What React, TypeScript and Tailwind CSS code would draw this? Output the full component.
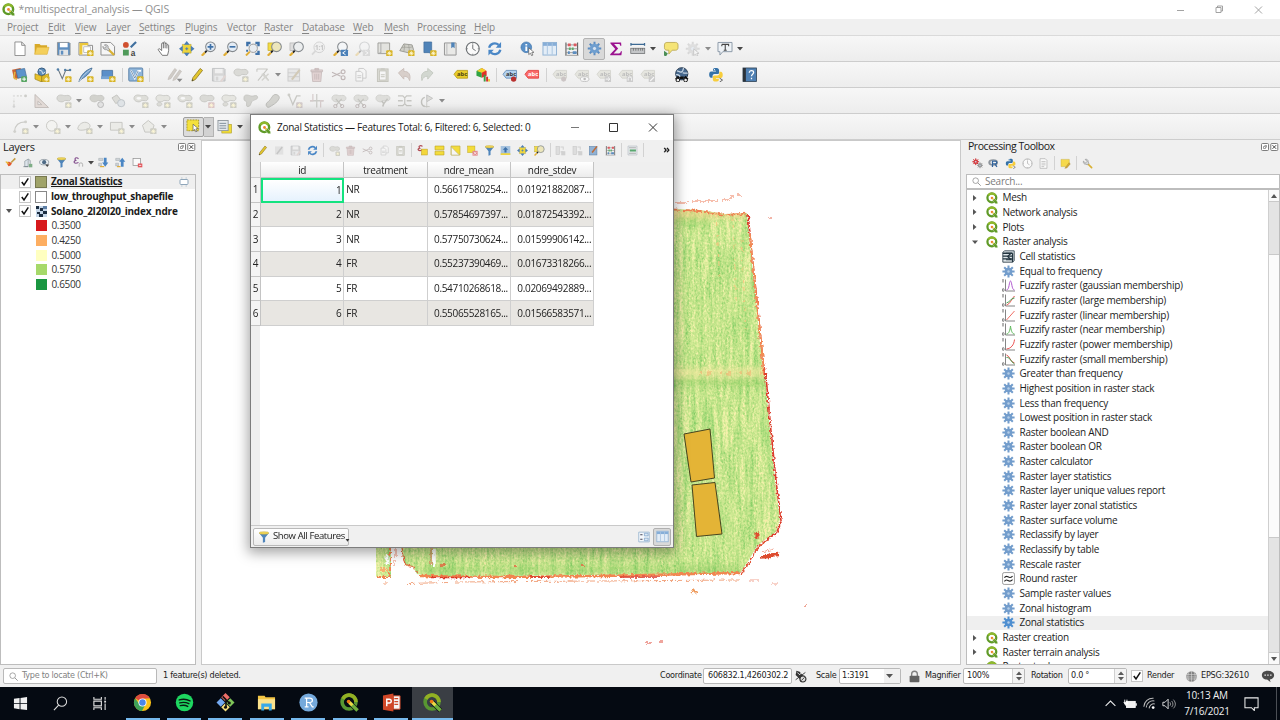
import React, { ReactNode } from "react";

const S = ({ children, className = "size-4", vb = "0 0 16 16" }: { children: ReactNode; className?: string; vb?: string }) => (
  <svg viewBox={vb} className={`shrink-0 ${className}`} fill="none">{children}</svg>
);

const Badge = ({ c = "#d8b426", x = 9.5, y = 9.5 }: { c?: string; x?: number; y?: number }) => (
  <g transform={`translate(${x} ${y})`}>
    <rect width="6.5" height="6.5" rx="1" fill={c} />
    <path d="M3.25 1v4.5M1 3.25h4.5M1.8 1.8l2.9 2.9M4.7 1.8 1.8 4.7" stroke="#fff8d8" strokeWidth=".8" />
  </g>
);
const GB = () => <Badge c="#cdcdc4" />;
const Pencil = ({ c = "#e3c62e", d = "#8a7420" }: { c?: string; d?: string }) => (
  <g><path d="M3 14.5 4 11 11.5 1.5 14 3.5 6.5 13Z" fill={c} stroke={d} strokeWidth=".8" /><path d="m3 14.5.5-1.8 1.2 1Z" fill="#333" /></g>
);
const Lens = ({ fill = "#f4f6f8", handle = true, children }: { fill?: string; handle?: boolean; children?: ReactNode }) => (
  <g>
    {handle && <path d="M6 10 4 12" stroke="#222" strokeWidth="2" />}
    {handle && <path d="M4 12 .8 15.2" stroke="#e0ad33" strokeWidth="2.2" />}
    <circle cx="9.8" cy="6" r="5" fill={fill} stroke="#858a8e" strokeWidth="1.1" />
    {children}
  </g>
);
const Cursor = ({ x = 8, y = 7 }: { x?: number; y?: number }) => (
  <path transform={`translate(${x} ${y})`} d="M0 0v7l1.8-1.4L3 8.2l1.3-.7-1.2-2.5 2.3-.3Z" fill="#fff" stroke="#555" strokeWidth=".7" />
);
const Gear = ({ c = "#6f9fd0", r = "#5b8cc2" }: { c?: string; r?: string }) => (
  <g>
    <path d="M8 .8v14.4M.8 8h14.4M2.9 2.9l10.2 10.2M13.1 2.9 2.9 13.1" stroke={r} strokeWidth="2.1" />
    <circle cx="8" cy="8" r="5" fill={c} />
    <circle cx="8" cy="8" r="2.2" fill="#d4e2f2" stroke={r} strokeWidth=".7" />
  </g>
);
const QLogo = () => (
  <g>
    <circle cx="7.8" cy="7.8" r="5.9" fill="#fff" stroke="#5f9a27" strokeWidth="3" />
    <path d="M3 4.6A5.900 5.900 0 0 1 12.6 4.6" stroke="#8fb82b" strokeWidth="3" />
    <path d="M9 9h2.700l3.8 4.300v2.400h-3L9 11.800Z" fill="#5f9a27" stroke="#fff" strokeWidth=".5" />
    <circle cx="8" cy="8" r="1.700" fill="#ee8432" /><path d="m8.800 8.800 2.200 2.200" stroke="#f0c840" strokeWidth="1.300" />
  </g>
);
const Tag = ({ bg, bd, fg, children }: { bg: string; bd: string; fg: string; children?: ReactNode }) => (
  <g>
    <path d="M1 7.5 4.2 3.5H15v8H4.2Z" fill={bg} stroke={bd} strokeWidth=".9" />
    <text x="4.2" y="9.6" fontSize="6" fontWeight="700" fontFamily="Open Sans, sans-serif" fill={fg}>abc</text>
    {children}
  </g>
);
const Blob = ({ c = "#dadad6" }: { c?: string }) => (
  <path d="M1 5.5C1 2 5 1.500 7.500 2.500s4-1 6.500.5 1.500 5-1 5-3.500-1-5 .5S1 9 1 5.500Z" fill={c} stroke="#c2c2be" strokeWidth=".8" />
);
const Python = () => (
  <g>
    <path d="M8 1C5 1 5.200 2.300 5.200 3.800H8.200v.8H3.500C1.500 4.600 1.200 6.500 1.200 8s.6 3 2 3h1.500V9.300c0-1.200 1-2 2-2h3.100c1 0 1.600-.8 1.600-1.700V3.200C11.400 1.600 10 1 8 1Z" fill="#3572a8" />
    <path d="M8.400 15c3 0 2.800-1.300 2.800-2.800H8.200v-.8h4.700c2 0 2.300-1.900 2.300-3.400s-.6-3-2-3h-1.500v1.700c0 1.200-1 2-2 2H6.600C5.600 8.700 5 9.500 5 10.400v2.400C5 14.400 6.400 15 8.400 15Z" fill="#f7cd3c" />
    <circle cx="6.700" cy="2.700" r=".6" fill="#fff" />
  </g>
);
const Refresh = () => (
  <g stroke="#4a87c6" strokeWidth="2.400"><path d="M2.200 7A6 6 0 0 1 12 4" /><path d="M13.800 9A6 6 0 0 1 4 12" /><path d="M14.500 1v6H9Z" fill="#4a87c6" stroke="none" /><path d="M1.500 15V9H7Z" fill="#4a87c6" stroke="none" /></g>
);
const Clock = ({ c = "#6e7275" }: { c?: string }) => (
  <g><circle cx="8" cy="8" r="6.700" fill="#fafafa" stroke={c} strokeWidth="1.200" /><path d="M8 3.500V8l3 2M8 1.800v1M8 13.200v1M1.800 8h1M13.200 8h1" stroke={c} /></g>
);
const Funnel = ({ c = "#4f85bb" }: { c?: string }) => (
  <g><path d="M1.500 2.500h13L9.500 9v5.500l-3 1V9Z" fill={c} /><ellipse cx="8" cy="2.600" rx="6.500" ry="1.700" fill="#f1d75a" stroke="#b89b26" strokeWidth=".5" /></g>
);
const Trash = () => <g fill="#e2d3d3" stroke="#c4b6b6" strokeWidth=".8"><path d="M3 5h10l-.8 10H3.800Z" /><path d="M2 3h12v1.800H2ZM6 1.500h4V3H6Z" /><path d="M6 7v6M8 7v6M10 7v6" /></g>;
const Scissors = ({ c = "#c0b7b7" }: { c?: string }) => <g stroke={c} strokeWidth="1.200"><path d="M1 5.500 10 9.500M1 10 10 6" /><circle cx="12.500" cy="5" r="2" /><circle cx="12.500" cy="11" r="2" /></g>;
const Copy = () => <g fill="#f5f5f5" stroke="#cacaca"><path d="M6 1.500h5l2.500 2.500v7.500H6Z" /><path d="M3 4.500h5l2 2V14.500H3Z" /><path d="M4.500 9h4M4.500 11h4" /></g>;
const Paste = () => <g stroke="#c4c4bc"><rect x="2.500" y="2" width="11" height="13" fill="#dcdcd6" /><rect x="4.500" y="4" width="7" height="9.500" fill="#f6f6f6" /><path d="M6 2h4M6 8h4M6 10h4" /></g>;
const Save = ({ c = "#5f8fc0", l = "#fff" }: { c?: string; l?: string }) => (
  <g><path d="M1.500 1.500h12l1 1v12h-13Z" fill={c} stroke="#8a8e92" strokeWidth=".9" /><rect x="4" y="2" width="8" height="4.500" fill={l} /><rect x="3.500" y="9" width="9" height="5.500" fill="#e3e5e7" /><rect x="5" y="10" width="2.500" height="4" fill={c} /></g>
);
const Abacus = () => (
  <g><path d="M2 1.500v13M14 1.500v13" stroke="#666" strokeWidth="1.200" /><path d="M2 4h12M2 8h12M2 12h12M1 14.800h14" stroke="#888" strokeWidth=".8" /><path d="M4 4h3M10 4h3" stroke="#dd5a5f" strokeWidth="2.600" /><path d="M5 8h2M8 8h2" stroke="#5dab6c" strokeWidth="2.600" /><path d="M4 12h2M9 12h4" stroke="#5c8dc0" strokeWidth="2.600" /></g>
);
const TableIc = () => (
  <g><rect x="1" y="1.500" width="14" height="13" fill="#e3edf7" stroke="#90b2d4" /><path d="M1 2h14v3H1Z" fill="#86aed8" /><path d="M5.500 2v12M10.500 2v12" stroke="#a9c4e0" /></g>
);
const Wrench = () => (
  <g><path d="m8 8 6 6" stroke="#d9b133" strokeWidth="2.400" strokeLinecap="round" /><path d="M2 4.500 5 7.300 7.300 5 4.600 2c2-.9 4.800.7 4.500 3.600L10 8 8 10 5.500 9C3.500 9.600 1.300 7 2 4.500Z" fill="#d5d7d8" stroke="#777" strokeWidth=".7" /></g>
);
const Expand = () => (
  <g fill="#4a7db5"><path d="M3.500 3.500h9v9h-9Z" fill="#edd53e" stroke="#b39a1e" strokeWidth=".5" /><path d="M8 0l3 3.800H5ZM8 16l3-3.800H5ZM0 8l3.800-3v6ZM16 8l-3.800-3v6Z" /><path d="M6.500 8h3M8 6.500v3" stroke="#4a7db5" /></g>
);

const disabledPoly = (d: string) => <><path d={d} fill="#ebebe7" stroke="#c6c6c2" strokeWidth="1" /><GB /></>;

const icons: Record<string, ReactNode> = {
  logo: <QLogo />,
  new: <path d="M3 1h7l3.500 3.500V15H3ZM10 1v3.500h3.500" fill="#fff" stroke="#858585" strokeWidth=".9" />,
  open: <><path d="M.7 13.500V3h5l1.300 1.500h6.500v9Z" fill="#d8a928" /><path d="M.7 13.800 2.800 6.500h12.700l-2 7.300Z" fill="#f4cf5b" stroke="#dcae30" strokeWidth=".6" /></>,
  save: <Save />,
  layout: <><path d="M1 1.500h9v3h5v10H1Z" fill="#f9f9f9" stroke="#8c8c8c" /><path d="M1.500 2h9v2.500h-6V14h-3Z" fill="#ecc73c" /><rect x="6" y="6" width="7" height="6" fill="#fff" stroke="#999" strokeWidth=".6" /><Badge /></>,
  layman: <><path d="M1 1.500h10l4 4v9H1Z" fill="#f6f6f6" stroke="#8c8c8c" /><path d="M8 8l6.500 6.500" stroke="#d9b133" strokeWidth="2.400" /><path d="M3 5.500 5 7.500 6.500 6 4.500 4C7 3 9 5 8.500 7L10 9 8.500 10.200 7 9C4.500 9.500 2.700 7.500 3 5.500Z" fill="#d0d2d4" stroke="#777" strokeWidth=".6" /></>,
  style: <><circle cx="4" cy="4" r="3" fill="#d0502f" /><path d="M9 6.500 14.500 1" stroke="#3f6f9e" strokeWidth="2.200" /><rect x="1" y="9" width="6" height="6" fill="#4f9a5a" /><text x="9" y="15" fontSize="8.500" fontWeight="700" fontFamily="Liberation Sans, sans-serif" fill="#444">a</text></>,
  hand: <path d="M5.500 14.800 1.500 9.500c-.8-1.400.8-2 1.700-1l1.600 1.400V3c0-1.400 1.700-1.400 1.800 0V1.800c.1-1.200 1.700-1.200 1.800 0V3c.2-1.200 1.800-1.100 1.800 0v1.500c.3-1 1.800-1 1.800.2v5.200c0 2-1 3-1.200 4.900ZM6.600 3v4.500M8.400 3v4.500M10.200 4.500v3.200" fill="#fff" stroke="#555" strokeWidth=".8" />,
  pan: <Expand />,
  zin: <Lens fill="#e4ecf5"><path d="M6.800 6h6M9.800 3v6" stroke="#3e71a8" strokeWidth="1.700" /></Lens>,
  zout: <Lens fill="#e4ecf5"><path d="M6.800 6h6" stroke="#3e71a8" strokeWidth="1.700" /></Lens>,
  zfull: <><circle cx="8.500" cy="7.500" r="4.300" fill="#e9edf1" stroke="#999" /><path d="M5 11 1 15" stroke="#e0ad33" strokeWidth="2" /><path d="M1.200.8h4.500v2.500H3.700v2H1.200ZM15.200.8h-4.500v2.500h2v2h2.500ZM15.200 14.500h-4.500V12h2v-2h2.500ZM1.200 9h2v2h-2Z" fill="#3e71a8" /></>,
  zsel: <><rect x="1" y="2" width="9" height="8" fill="#f3dc45" stroke="#b7a024" strokeWidth=".6" /><Lens fill="#ece6bb" /></>,
  zlay: <><rect x="1" y="2" width="9" height="8" fill="#ddd" stroke="#aaa" strokeWidth=".6" /><Lens fill="#eceeef" /></>,
  znat: <g opacity=".45"><path d="M5 10 1 14" stroke="#bbb" strokeWidth="2" /><circle cx="8.500" cy="6.500" r="5.500" fill="#eee" stroke="#aaa" /><text x="4" y="9" fontSize="6.500" fontWeight="700" fill="#888" fontFamily="Open Sans, sans-serif">1:1</text></g>,
  zlast: <><Lens /><rect x="8" y="9" width="7.500" height="6.500" rx=".6" fill="#4a80b8" /><path d="m13 10.300-3 2 3 2" stroke="#fff" /></>,
  znext: <g opacity=".3"><Lens /><rect x="8" y="9" width="7.500" height="6.500" fill="#aaa" /><path d="m10.500 10.300 3 2-3 2" stroke="#fff" /></g>,
  map3: <><path d="M1 2h12v11H1Z" fill="#e3e3df" stroke="#999993" strokeWidth=".9" /><path d="M4 2v11M1 13l3-1" stroke="#aaa" /><Badge /></>,
  map3d: <><path d="M.8 10 5 3l8.500 1 1.500 5-4 3.500Z" fill="#d0d0c9" stroke="#94948d" strokeWidth=".9" /><path d="M3 7c3-2 6 1 11-1M6 3.500 5 11M10 4l1 8" stroke="#9d9d96" strokeWidth=".7" /><Badge /></>,
  bmnew: <><path d="M3 1h8v13l-2.500-2H3Z" fill="#4f83b8" stroke="#3e6c9b" strokeWidth=".7" /><Badge /></>,
  bm: <><path d="M1.500 2h12v12.500h-12Z" fill="#e9e9e7" stroke="#959595" /><path d="M4 2v12" stroke="#bbb" /><path d="M8.500 1.500h3.500v6l-1.700-1.300L8.500 7.500Z" fill="#4f83b8" /></>,
  clock: <Clock />,
  refresh: <Refresh />,
  ident: <><circle cx="6.500" cy="6.500" r="5.500" fill="#5a90c8" stroke="#3f74ab" strokeWidth=".7" /><path d="M6.500 5.700v4.500M6.500 3v1.600" stroke="#fff" strokeWidth="1.900" /><Cursor x={9} y={7} /></>,
  table: <TableIc />,
  abacus: <Abacus />,
  gear: <Gear />,
  sigma: <path d="M2.500 1.500h11l.3 3.300h-1.200C12.300 3.500 12 3.200 10.800 3.200H6.300l4.200 4.600-4.700 5h5.500c1.300 0 1.600-.6 2-2.100h1.100l-.6 4H2.300v-1l5.200-5.500-5-5.600Z" fill="#9b128f" />,
  ruler: <><path d="M1 3.500h14M1 2v3M15 2v3" stroke="#3d6a94" strokeWidth="1.300" /><rect x=".8" y="7.500" width="14.400" height="5.500" fill="#c4c6c8" stroke="#707274" strokeWidth=".8" /><path d="M3.500 7.500v2.500M6 7.500v2.500M8.500 7.500v2.500M11 7.500v2.500M13 7.500v2.500" stroke="#555" strokeWidth=".7" /></>,
  tip: <><path d="M4 1.500h9c1.500 0 2.500 1 2.500 2.500v3c0 1.500-1 2.500-2.500 2.500H9.500L6 13.500v-4H4C2.500 9.500 1.500 8.500 1.500 7V4c0-1.500 1-2.500 2.500-2.500Z" fill="#f5e477" stroke="#b5a24a" strokeWidth=".8" /><path d="m1 10 4 3-2 3-2-1Z" fill="#4b8e55" /></>,
  gearoff: <g opacity=".35"><Gear c="#bbb" r="#aaa" /><Cursor x={9} y={8} /></g>,
  text: <><path d="M1 1.500h14.500v9.500H6l-3 3.500V11H1Z" fill="#eef2f6" stroke="#8c9aa8" /><path d="M5 3.500h7v2M5 3.500v2M8.500 3.500v6M7 9.500h3" stroke="#444" strokeWidth="1.100" /></>,
  dsm: <><rect x="1" y="2" width="9" height="10" fill="#ce6430" transform="rotate(-12 5 7)" /><path d="m4 3 9-1.500 2 8.500-9 1.500Z" fill="#5c93cb" stroke="#426c96" strokeWidth=".7" /><path d="m3 5-1 6 3 2" stroke="#e3b744" strokeWidth="1.500" /><rect x="9.500" y="9.500" width="6" height="6" rx="1" fill="#58a563" /><path d="M12.500 10.500v4M10.500 12.500h4" stroke="#fff" /></>,
  gpkg: <><circle cx="8" cy="5" r="4" fill="#5d8dbb" stroke="#34597e" /><path d="M5 3l3 1 1 3 3-2" stroke="#dbe7f1" /><path d="m1 7 7 2.500L15 7v5.500l-7 3-7-3Z" fill="#e8c228" stroke="#9c811d" strokeWidth=".7" /><path d="M8 9.500v6" stroke="#9c811d" /><Badge /></>,
  shp: <><path d="m2 2 4.500 10L10 3.500h4.500" stroke="#6b7780" strokeWidth="1.100" /><circle cx="2" cy="2.500" r="1.300" fill="#517fa8" /><circle cx="9.500" cy="3" r="1.300" fill="#517fa8" /><circle cx="14.500" cy="3" r="1.300" fill="#517fa8" /><Badge /></>,
  lite: <><path d="M1 15C3 8 8 3 14.500 1 13 5 10 9 3.500 12.500Z" fill="#6c9aca" stroke="#3f678f" strokeWidth=".8" /><path d="M1.500 14.500C5 9 9 5.500 13 2.500" stroke="#e7eef6" strokeWidth=".7" /><Badge /></>,
  mem: <><path d="M2 3.500h11v7H2Z" fill="#5b8fc9" stroke="#466f9d" strokeWidth=".8" /><path d="M1 9.500h14v3H1Z" fill="#78a5d5" /><Badge /></>,
  virt: <><rect x=".8" y="1" width="14.400" height="13.500" rx="1" fill="#8fb5d9" stroke="#5f85ab" /><path d="m3 3.500 4 8 3.500-7.500h3" stroke="#fff" strokeWidth="1.800" /><path d="m3 3.500 4 8 3.500-7.500" stroke="#486b8f" strokeWidth=".7" /><Badge /></>,
  pens: <g><path d="M1 13 2 10 8 1.500l2 1.500L4 12ZM6 14l1-3 6-8 2 1.500-6 8.500Z" fill="#cfcbc6" stroke="#bdb8b2" strokeWidth=".6" /><path d="M10 12h6l-3 3.500Z" fill="#8a8a8a" /></g>,
  pencil: <Pencil />,
  saveoff: <g opacity=".5"><Save c="#bbb" l="#eee" /><path d="m10 15 5-6" stroke="#d2bcb7" strokeWidth="2" /></g>,
  addpoly: <g><Blob /><GB /></g>,
  vertex: <><path d="M2 2h11M2 2v3M13 2 3 14M9 7l5 7" stroke="#c7c7c3" strokeWidth="1.100" /><path d="m7 7 7 7M14 7l-7 7" stroke="#d4d4d0" strokeWidth="1.500" /></>,
  modify: <g opacity=".5"><rect x="1" y="2" width="12" height="12.500" fill="#ddd" stroke="#aaa" /><path d="M1 6h12M1 10h12" stroke="#aaa" /><path d="m5 13 8-10" stroke="#b3a37d" strokeWidth="2.200" /></g>,
  trash: <Trash />, cut: <Scissors />, copy: <Copy />, paste: <Paste />,
  undo: <path d="M1.500 6 7 1.500v3c5 0 7.500 3 6 9.500-1-3-2.500-4.500-6-4.500v3Z" fill="#d8cfca" stroke="#cabfba" strokeWidth="1" />,
  redo: <path d="M14.500 6 9 1.500v3C4 4.500 1.500 7.500 3 14c1-3 2.500-4.500 6-4.500v3Z" fill="#d2d7d0" stroke="#c5cac2" strokeWidth="1" />,
  tagy: <Tag bg="#e8cc2a" bd="#b99f1e" fg="#4a4210" />,
  diagram: <><path d="M7 1 1.500 4v5L7 11Z" fill="#31a343" /><path d="m7 1 5 3v5l-5 2Z" fill="#e12f28" /><path d="m2 4 5-3 4.500 2.500L7 6Z" fill="#f5ce2b" /><path d="M9 8h2v7H9Z" fill="#3f9c45" /><path d="M11.500 10h2v5h-2Z" fill="#d5302e" /><path d="M13.500 12.500h2V15h-2Z" fill="#e9c535" /></>,
  tagpin: <Tag bg="#b4d2ef" bd="#668fb8" fg="#333"><circle cx="12" cy="12.500" r="2.800" fill="#b8312f" /></Tag>,
  tagr: <Tag bg="#f96a67" bd="#e2403e" fg="#fff" />,
  to1: <g opacity=".5"><Tag bg="#d9d9cc" bd="#b5b5aa" fg="#888"><circle cx="12" cy="12.500" r="2.600" fill="#a99c9c" /></Tag></g>,
  to2: <g opacity=".5"><Tag bg="#d9d9cc" bd="#b5b5aa" fg="#888"><ellipse cx="11" cy="12.500" rx="4.500" ry="2.500" fill="#fff" stroke="#999" /><circle cx="11" cy="12.500" r="1.300" fill="#888" /></Tag></g>,
  to3: <g opacity=".5"><Tag bg="#d9d9cc" bd="#b5b5aa" fg="#888"><rect x="9" y="9.500" width="6.500" height="6" fill="#aaa" /><path d="M10 12.500h4M12.500 10.800l1.800 1.700-1.800 1.700" stroke="#fff" /></Tag></g>,
  to4: <g opacity=".5"><Tag bg="#d9d9cc" bd="#b5b5aa" fg="#888"><rect x="9" y="9.500" width="6.500" height="6" fill="#aaa" /><path d="M10.500 14v-2a1.700 1.700 0 0 1 3.500 0v2" stroke="#fff" /></Tag></g>,
  to5: <g opacity=".5"><Tag bg="#d9d9cc" bd="#b5b5aa" fg="#888"><rect x="9" y="9.500" width="6.500" height="6" fill="#aaa" /><path d="m10.500 14.500 4-4" stroke="#fff" strokeWidth="1.300" /></Tag></g>,
  globe: <><circle cx="8" cy="7" r="6.300" fill="#46688e" stroke="#273a50" /><path d="M3 4c2 0 3 2 5 1s1-3 2-4M2 8c3-1 4 1 5 3M9 6c2 0 4 1 5 0" stroke="#c9d8e6" strokeWidth="1.300" /><path d="m5 10-3 3M11 10l3 3M6 11h4" stroke="#111" strokeWidth="2.600" /><circle cx="4" cy="13.500" r="1.900" fill="#eee" stroke="#111" /><circle cx="12" cy="13.500" r="1.900" fill="#eee" stroke="#111" /></>,
  python: <><Python /><path d="m12 11.500 3 2-3 2" stroke="#555" strokeWidth=".9" /></>,
  help: <><rect x="1" y="1" width="14" height="14" fill="#4f80b3" stroke="#2c3e50" strokeWidth=".8" /><path d="M1 1h3v14H1Z" fill="#2c3238" /><path d="M7.500 6c0-3 4.500-2.700 4.500-.3 0 1.800-2.200 1.700-2.200 3.800M9.800 11v1.700" stroke="#fff" strokeWidth="1.300" /></>,
  g1: <><path d="M2 13V6M5 3h6" stroke="#cacac6" strokeDasharray="2 1.300" /><circle cx="2" cy="14" r="1.300" fill="#d2d2d2" /><circle cx="14" cy="3" r="1.500" fill="#cdcdc9" /><circle cx="2" cy="3" r="1.200" fill="#e2e2e2" /></>,
  g2: <path d="M1 1.500V15h14ZM4 8.500V12h4Z" fill="#e2dad6" stroke="#bfb8b4" strokeWidth=".9" fillRule="evenodd" />,
  b1: <g><Blob /><GB /></g>,
  b2: <g><Blob c="#d2d2cd" /><circle cx="12" cy="12" r="3" fill="#e2e2e2" stroke="#b8b8b8" /></g>,
  b3: <g><path d="M1 5 6 2l4 5-5 4Z" fill="#dcdcd8" stroke="#c4c4c0" /><circle cx="10.500" cy="10.500" r="3.700" fill="#dfe3e6" stroke="#bfc4c8" /></g>,
  b4: <g><Blob c="#deded9" /><ellipse cx="6" cy="5.500" rx="2.500" ry="1.500" fill="#f8f8f8" /><GB /></g>,
  b5: <g><Blob c="#e5e5e0" /><path d="M2 12c0-3 4-3 5-1s-4 4-5 1Z" fill="#dbdbd6" stroke="#c4c4c0" strokeWidth=".7" /><GB /></g>,
  b6: <g><Blob /><Badge c="#dcc6c6" /></g>,
  b7: <path d="M1 5C1 1 5 2 8 3s6-2 7 1-5 3-6 5-1 5-4 5S5 9 3 8.500 1 7 1 5Z" fill="#d3d3cf" stroke="#c2c2be" strokeWidth=".8" />,
  b8: <path d="M2 10c2-1 4-4 6-7s8-1 6.500 3S7 13 4.500 14.500 0 12 2 10Z" fill="#d3d3cf" stroke="#b9b9b5" strokeWidth=".9" />,
  v1: <><path d="m2 2 4 10 4-9h4" stroke="#c8c8c4" strokeWidth="1.300" /><circle cx="2" cy="2" r="1.500" fill="#cdcdc8" /><Badge c="#d3cbcb" /></>,
  v2: <><path d="M8 1v14M1 8h14" stroke="#ccccc8" strokeWidth="1.300" /><path d="M4 1v7h-3M12 15V8h3" stroke="#d7cdcd" strokeWidth="1.300" /></>,
  sc: <g opacity=".8"><Blob /><path d="m5 6 6 7M11 6l-6 7" stroke="#b9b9b4" strokeWidth="1.200" /><circle cx="4.500" cy="13.500" r="1.700" stroke="#b9aeae" /><circle cx="11.500" cy="13.500" r="1.700" stroke="#b9aeae" /></g>,
  sc2: <g opacity=".8"><Blob /><path d="m7 8 2 3 4-5M9 11l-1 3" stroke="#b9b9b4" strokeWidth="1.600" /></g>,
  mrg: <path d="M1 3h5l2 2 2-2h5M1 8h5M10 8h5M1 13h5l2-2 2 2h5M8 5v6" stroke="#c6c6c2" strokeWidth="1.300" />,
  rot: <><path d="M6 14a5 5 0 0 1 0-9.500" stroke="#c2c2be" strokeWidth="1.500" /><path d="m8 2 6 3.500L8 9Z" fill="#dcdcd8" stroke="#c2c2c2" /><path d="M8 9v6M6 14h5" stroke="#ccccc8" /></>,
  curve: <><path d="M1.500 13C2 7 6 3 13 3" stroke="#cacac6" strokeWidth="1.100" /><circle cx="1.800" cy="13" r="1.500" fill="#d0d0cc" /><circle cx="13" cy="3" r="1.500" fill="#d0d0cc" /><GB /></>,
  circ: <><circle cx="7" cy="7" r="5.500" fill="#f3f3f1" stroke="#c9c9c5" /><GB /></>,
  ell: disabledPoly("M1 9c1-4 6-7 10-5s3 6-2 7-9 1-8-2Z"),
  rect: disabledPoly("M1.500 3.500h12v8h-12Z"),
  penta: disabledPoly("m7.500 1.500 6 5-2.300 7H4L1.500 6.500Z"),
  select: <><rect x="1" y="1" width="12.500" height="11.500" fill="#f4e13d" stroke="#a09020" strokeWidth=".9" strokeDasharray="2 1" /><Cursor x={7.500} y={5.500} /></>,
  selform: <><rect x="5" y="5.500" width="10" height="9" fill="#f2dd38" stroke="#a8982a" strokeWidth=".6" /><rect x="1" y="1.500" width="10.500" height="10.500" fill="#e5e9ed" stroke="#8a9299" strokeWidth=".9" /><path d="M2.500 4.500h7M2.500 7h7M2.500 9.500h7" stroke="#7f8d9b" /></>,
  brush: <><path d="m15 2-6 6" stroke="#c49c46" strokeWidth="2.400" /><path d="M2 8c3-2 5-1 8 1-1 3-3 4-5 4.500Z" fill="#e25a2e" /><path d="M1 7c2 0 3 1 4 3" stroke="#e9be37" strokeWidth="2" /></>,
  group: <><path d="M4 14V6l5-3v11ZM9 3l3 2v8" fill="#dde4ea" stroke="#7f8b94" strokeWidth=".9" /><path d="M2 14h7" stroke="#6d7982" /><rect x="10" y="10" width="5" height="5" fill="#7fae86" /></>,
  eye: <><ellipse cx="7.500" cy="7.500" rx="6.700" ry="4" fill="#e9eef2" stroke="#7d8991" /><circle cx="7.500" cy="7.500" r="3" fill="#4e6a86" /><path d="M9 11h6l-3 3.500Z" fill="#444" /></>,
  funnel: <Funnel />,
  eps: <><path d="M8 2.500C5-.5 1 2 4 5c-4 1-3 6 4 3" stroke="#84508e" strokeWidth="1.700" /><path d="M9 14V11a2.500 2.500 0 0 1 5 0v3" stroke="#aaa" strokeWidth="1.300" /></>,
  exp: <><path d="M1 2h6v3H1ZM1 9h4v4H1Z" fill="#cfd4d8" stroke="#8f979e" strokeWidth=".6" /><path d="M8.500 1h4v7h2.500L10.500 14 6 8h2.500Z" fill="#4a86c4" /><path d="M3 14h6" stroke="#dfac34" strokeWidth="1.700" /></>,
  col: <><path d="M1 2h6v3H1ZM1 9h4v4H1Z" fill="#cfd4d8" stroke="#8f979e" strokeWidth=".6" /><path d="M8.500 14h4V7H15L10.500 1 6 7h2.500Z" fill="#4a86c4" /><path d="M3 14h5" stroke="#dfac34" strokeWidth="1.700" /></>,
  rem: <><rect x="1.500" y="2" width="11" height="10.500" fill="#fafafa" stroke="#8c8c8c" /><rect x="8.500" y="9.500" width="6.500" height="5.500" fill="#e3545a" /><path d="M10 12.200h3.500" stroke="#fff" strokeWidth="1.200" /></>,
  models: <><g transform="scale(.68)"><Gear c="#d8383c" r="#c8282c" /></g><g transform="translate(7 6) scale(.58)"><Gear c="#9a9a9a" r="#777" /></g></>,
  rstat: <><ellipse cx="7.500" cy="6.500" rx="7" ry="4.700" fill="#8d949b" /><ellipse cx="8" cy="6.500" rx="4.500" ry="2.700" fill="#f0f0f0" /><path d="M6.500 13V4.500h4c3 0 3 4 0 4h-4M10 8.500l3 4.500" stroke="#31639c" strokeWidth="1.800" /></>,
  clockg: <Clock c="#a9a9a9" />,
  doc: <path d="M3 1h7.500L13 3.500V15H3ZM5 5h6M5 7.500h6M5 10h6M5 12.500h4" fill="#fbfbfb" stroke="#a5a5a5" strokeWidth=".9" />,
  edit: <><path d="M1.500 2h12v8l-3 2.500h-9Z" fill="#f6d94c" stroke="#c2a72f" strokeWidth=".6" /><path d="m7 15 6-8 2 1.500-5 6Z" fill="#d9ae39" stroke="#96752a" strokeWidth=".5" /></>,
  wrench: <Wrench />,
  eoff: <g opacity=".4"><rect x="1.500" y="2" width="12" height="12" fill="#ccc" /><path d="m4 13 8-10" stroke="#888" strokeWidth="2.200" /></g>,
  sexp: <><path d="M8 2C5-.5 1 2 4 4.500c-4 1-3 5 4 3" stroke="#b04a52" strokeWidth="1.700" /><rect x="6.500" y="6" width="8.500" height="8.500" fill="#f3d63a" stroke="#bfa126" strokeWidth=".8" /></>,
  sall: <><path d="M1.500 1.500h13v5.500h-13ZM1.500 9h13v5.500h-13Z" fill="#f3dc3a" stroke="#bca41f" strokeWidth=".9" /></>,
  sinv: <><path d="M1.500 1.500h13v13h-13Z" fill="#f3dc3a" stroke="#c2ad3c" /><path d="M2 3v11.500h11.500Z" fill="#f6f6f6" stroke="#b9b07a" strokeWidth=".8" /></>,
  sdes: <><rect x="1" y="1.500" width="10.500" height="9.500" fill="#f3dc3a" stroke="#bca41f" strokeWidth=".7" /><rect x="8" y="8.500" width="7.500" height="7" fill="#e28a8d" /><path d="m9.800 10 4 4M13.800 10l-4 4" stroke="#fff" /></>,
  top: <><rect x="1" y="1.500" width="14" height="13" fill="#a5c2de" /><path d="M1 12h14v2.500H1Z" fill="#f3d63a" /><path d="M8 3l4 4H9.500v4h-3V7H4Z" fill="#3b6fa8" /></>,
  newcol: <g opacity=".35"><rect x="1.500" y="2" width="5" height="12" fill="#bbb" stroke="#888" /><path d="M8 3h4v4M8 10h4" stroke="#999" strokeWidth="1.500" /><rect x="9" y="9" width="6" height="6" fill="#999" /></g>,
  cf: <><rect x="2" y="2" width="11" height="12.500" fill="#91b2d4" stroke="#5f82a7" strokeWidth=".8" /><path d="m6 11 7-9" stroke="#c06a36" strokeWidth="2.200" /></>,
  form: <><path d="M1.500 1.500h13v13h-13Z" fill="#e8ebee" stroke="#b9bfc5" /><path d="M3 4h10M3 12h10" stroke="#aaa" strokeWidth="1.300" /><path d="M4 8h9" stroke="#5ba871" strokeWidth="3" /></>,
  formview: <><path d="M1 1.500h14v13H1Z" fill="#f4f8fc" stroke="#8cabca" /><path d="M3 5h3M3 11h3" stroke="#445" strokeWidth="1.500" /><path d="M8.500 3h5v3.500h-5ZM8.500 9.500h5V13h-5Z" fill="#dbe8f4" stroke="#7ba0c8" /></>,
};
const Ic = ({ n, className }: { n: string; className?: string }) => <S className={className}>{icons[n]}</S>;

const Cell = ({ n }: { n: string }) => <div className="flex w-[22px] shrink-0 justify-center"><Ic n={n} className="size-[15.500px]" /></div>;
const Cells = ({ list }: { list: string }) => <>{list.split(" ").map((n, i) => <Cell key={i} n={n} />)}</>;
const Handle = ({ className = "w-3" }: { className?: string }) => (
  <div className={`flex h-4 shrink-0 justify-end pr-1 ${className}`}>
    <div className="h-4 w-[3px] bg-[radial-gradient(#c6c6c6_38%,transparent_45%)] bg-[length:2px_2px]" />
  </div>
);
const Sep = ({ className = "w-[5px]" }: { className?: string }) => <div className={`flex shrink-0 justify-center ${className}`}><div className="h-[14px] w-px bg-[#d2d2d2]" /></div>;
const Arr = ({ dark = false, className = "w-[10px]" }: { dark?: boolean; className?: string }) => (
  <div className={`flex shrink-0 pl-px ${className}`}>
    <S vb="0 0 6 4" className="h-1 w-1.5"><path d="M0 0h6L3 3.600Z" fill={dark ? "#484848" : "#8b8b8b"} /></S>
  </div>
);
const Bar = ({ children }: { children: ReactNode }) => (
  <div className="flex h-[26px] shrink-0 items-center border-b border-[#cdcdcd] bg-linear-to-b from-[#f7f7f7] to-[#ededed]">{children}</div>
);

const menus: [string, number, string][] = [
  ["Project", 3, "w-[41px]"], ["Edit", 0, "w-[27px]"], ["View", 0, "w-[31px]"], ["Layer", 0, "w-[33px]"], ["Settings", 0, "w-[46px]"],
  ["Plugins", 0, "w-[42px]"], ["Vector", 4, "w-[37px]"], ["Raster", 0, "w-[38px]"], ["Database", 0, "w-[51px]"], ["Web", 0, "w-[31px]"],
  ["Mesh", 0, "w-[33px]"], ["Processing", 9, "w-[57px]"], ["Help", 0, "w-[30px]"],
];

const Toolbars = () => (
  <div className="flex h-[140px] shrink-0 flex-col overflow-hidden">
    <div className="flex h-[19px] shrink-0 items-center bg-white pl-[2px] text-[10px] text-[#8f8f8f]">
      <Ic n="logo" className="size-[13px]" />
      <span className="ml-[3.500px] flex-1 text-[10.500px] tracking-[-0.100px]">*multispectral_analysis — QGIS</span>
      <S vb="0 0 100 12" className="h-3 w-[100px]"><path d="M10 6.500h7M49 3.500h5v5h-5ZM50.500 3.500V2h5v5H54M88 2.500l7 7M95 2.500l-7 7" stroke="#999" strokeWidth=".9" /></S>
      <div className="w-[13px]" />
    </div>
    <div className="flex h-[17px] shrink-0 items-center border-b border-[#dadada] bg-[#f0f0f0] pt-px pl-[7px] text-[10px] tracking-[-0.160px] text-[#848484]">
      {menus.map(([m, u, w]) => (
        <span key={m} className={`${w} shrink-0 whitespace-nowrap`}>{m.slice(0, u)}<span className="underline underline-offset-2">{m[u]}</span>{m.slice(u + 1)}</span>
      ))}
    </div>
    <Bar>
      <Handle className="w-[9px]" /><Cells list="new open save layout layman style" />
      <Handle className="w-[13px]" /><Cells list="hand pan zin zout zfull zsel zlay znat zlast znext map3 map3d bmnew bm clock refresh" />
      <Handle className="w-[11px]" /><Cells list="ident table abacus" />
      <div className="flex size-[22px] shrink-0 items-center justify-center rounded-xs border border-[#b3b3b3] bg-[#d9d9d9]"><Ic n="gear" className="size-[15px]" /></div>
      <Cells list="sigma ruler" /><Arr dark className="w-[11px]" /><Cells list="tip gearoff" /><Arr /><Cells list="text" /><Arr dark />
    </Bar>
    <Bar>
      <Handle className="w-[9px]" /><Cells list="dsm gpkg shp lite mem" /><Sep className="w-1.5" /><Cells list="virt" /><Sep className="w-1" />
      <Handle className="w-[13px]" /><Cells list="pens pencil saveoff addpoly vertex" /><Arr /><Cells list="modify trash cut copy paste undo redo" />
      <Handle /><Cells list="tagy diagram" /><Sep /><Cells list="tagpin tagr" /><Sep className="w-1.5" /><Cells list="to1 to2 to3 to4 to5" />
      <Handle /><Cells list="globe" /><Handle /><Cells list="python" /><Handle /><Cells list="help" /><Handle />
    </Bar>
    <Bar>
      <Handle className="w-[9px]" /><Cells list="g1 g2 b1" /><Arr className="w-[11px]" />
      <Cells list="b2 b3 b4 b5 b4 b6 b5 b7 b8 v1 v2 sc sc sc2 mrg rot" /><Arr />
    </Bar>
    <Bar>
      <Handle className="w-[10px]" />
      {["curve", "circ", "ell", "rect", "penta"].map((n) => <React.Fragment key={n}><Cell n={n} /><Arr /></React.Fragment>)}
      <Handle className="w-[13px]" />
      <div className="flex h-5 w-[21px] shrink-0 items-center justify-center rounded-xs border border-[#9f9f9f] bg-[#dcdcdc]"><Ic n="select" className="size-[15px]" /></div>
      <div className="flex h-5 w-[10px] shrink-0 items-center border border-l-0 border-[#b3b3b3] bg-[#d2d2d2]"><Arr dark /></div>
      <Cells list="selform" /><Arr dark className="w-[14px]" /><Cells list="sall" />
    </Bar>
  </div>
);

const DockButtons = () => (
  <S vb="0 0 18 8" className="h-2 w-[18px]">
    <rect x=".5" y=".5" width="7" height="7" rx="1" fill="#fff" stroke="#6f6f6f" strokeWidth=".9" /><path d="M2.500 3.500h2v2h-2ZM3.500 2.500h2v2" stroke="#777" strokeWidth=".7" />
    <rect x="9.800" y=".5" width="7" height="7" rx="1" fill="#fff" stroke="#6f6f6f" strokeWidth=".9" /><path d="m11.500 2.200 3.600 3.600M15.100 2.200l-3.600 3.600" stroke="#444" />
  </S>
);
const Check = () => (
  <div className="flex size-3 shrink-0 items-center justify-center border border-[#c6c6c6] bg-white">
    <S vb="0 0 10 10" className="size-[10px]"><path d="M1.800 5 4 8 8.300 1.300" stroke="#111" strokeWidth="1.500" /></S>
  </div>
);
const SmallCells = ({ list, w = "w-[17px]" }: { list: string; w?: string }) => (
  <>{list.split(" ").map((n, i) => <div key={i} className={`flex shrink-0 justify-center ${w}`}><Ic n={n} className="size-[11px]" /></div>)}</>
);

const LayersPanel = () => (
  <div className="flex w-[201px] shrink-0 flex-col">
    <div className="flex h-[14px] items-center justify-between pr-[5px] pl-[3px] text-[11px] tracking-[-0.280px]"><span>Layers</span><DockButtons /></div>
    <div className="flex h-[19.500px] items-center pb-[2px] pl-[2px]">
      <SmallCells list="brush group eye funnel eps" /><Arr dark className="w-2" /><SmallCells list="exp col rem" />
    </div>
    <div className="mr-[5px] flex-1 border border-[#bdbdbd] bg-white text-[10px] font-bold tracking-[-0.300px]">
      <div className="flex h-[14.700px] items-center bg-[#efefef] pl-[18px]">
        <Check /><span className="ml-1 size-3 border border-[#77784f] bg-[#a0a369]" /><span className="ml-1 flex-1 underline">Zonal Statistics</span>
        <S vb="0 0 12 10" className="mr-[5px] h-[10px] w-3"><rect x="2" y="2.500" width="8" height="5" rx="1" fill="#fff" stroke="#8fa6ba" /><path d="M3 1h1.500M7.500 1H9M3 9h1.500M7.500 9H9" stroke="#a9bac8" strokeWidth=".7" /></S>
      </div>
      <div className="flex h-[14.700px] items-center pl-[18px]"><Check /><span className="ml-1 size-3 border border-[#888] bg-white" /><span className="ml-1">low_throughput_shapefile</span></div>
      <div className="flex h-[14.700px] items-center pl-[5px]">
        <S vb="0 0 6 4" className="mr-[7px] h-1 w-1.5"><path d="M0 0h6L3 4Z" fill="#555" /></S><Check />
        <S vb="0 0 12 12" className="ml-1 size-3"><rect x="1" y="1" width="11" height="11" fill="#c5d6e8" /><path d="M1 1h3v3H1ZM5 3h3v3H5ZM8 6h4v3H8ZM2 7h3v2H2ZM4 9h4v3H4Z" fill="#1d2e42" /><path d="M8 1h4v3H8Z" fill="#5c7ea5" /></S>
        <span className="ml-1 tracking-[-0.220px]">Solano_2I20I20_index_ndre</span>
      </div>
      {[["0.3500", "bg-[#d7191c]"], ["0.4250", "bg-[#fdae61]"], ["0.5000", "bg-[#ffffc0]"], ["0.5750", "bg-[#a6d96a]"], ["0.6500", "bg-[#1a9641]"]].map(([v, c]) => (
        <div key={v} className="flex h-[14.650px] items-center pl-[35px] text-[10px] font-normal tracking-[-0.350px] text-[#333]"><span className={`size-[11px] ${c}`} /><span className="ml-[4.500px]">{v}</span></div>
      ))}
    </div>
  </div>
);

const field = "M378 209L674 209L700 210L725 214L747 213L750 245L756 300L762 362L765 376L770 430L775 480L780 520L776 532L766 539L757 546L749 560L740 573L700 574L600 575L432 577L417 574L413 567L405 565L401 548Z";

const MapCanvas = () => (
  <div className="min-w-0 flex-1 overflow-hidden border border-[#c9c9c9] bg-white">
    <svg viewBox="202 141 758 523" className="block h-[523px] w-[758px]" fill="none">
      <defs>
        <filter id="crop" x="0" y="0" width="100%" height="100%" colorInterpolationFilters="sRGB">
          <feTurbulence type="fractalNoise" baseFrequency="0.24 0.02" numOctaves="3" seed="8" result="a" />
          <feTurbulence type="fractalNoise" baseFrequency="0.55 0.4" numOctaves="2" seed="3" result="b" />
          <feComposite in="a" in2="b" operator="arithmetic" k2=".5" k3=".5" />
          <feColorMatrix values="1 0 0 0 0 1 0 0 0 0 1 0 0 0 0 0 0 0 0 1" />
          <feComponentTransfer>
            <feFuncR type="table" tableValues=".45 .45 .5 .58 .69 .775 .86 .96 .99 1 1" />
            <feFuncG type="table" tableValues=".76 .76 .79 .83 .87 .9 .93 .95 .9 .8 .8" />
            <feFuncB type="table" tableValues=".36 .36 .38 .44 .5 .55 .61 .68 .66 .6 .6" />
          </feComponentTransfer>
          <feComposite in2="SourceGraphic" operator="in" />
        </filter>
        <filter id="rough" filterUnits="userSpaceOnUse" x="202" y="141" width="758" height="523" colorInterpolationFilters="sRGB">
          <feTurbulence type="fractalNoise" baseFrequency="0.35" numOctaves="3" seed="5" result="n" />
          <feDisplacementMap in="SourceGraphic" in2="n" scale="4.5" xChannelSelector="R" yChannelSelector="G" />
        </filter>
        <filter id="soft" x="-20%" y="-50%" width="140%" height="200%"><feGaussianBlur stdDeviation="3" /></filter>
        <clipPath id="fieldClip"><path d={field} /></clipPath>
      </defs>
      <path d={field} fill="#fff" filter="url(#crop)" />
      <g clipPath="url(#fieldClip)">
        <g filter="url(#soft)">
          <path d="M660 372.500 770 372" stroke="#f8e8a2" strokeWidth="8" opacity=".7" />
          <path d="M660 382.500 770 382M660 222 710 223" stroke="#7dc455" strokeWidth="7" opacity=".4" />
          <path d="M660 213 748 214" stroke="#f6cf8a" strokeWidth="6" opacity=".8" />
          <path d="M420 570 740 569" stroke="#7dc455" strokeWidth="5" opacity=".5" />
        </g>
        <g filter="url(#rough)" strokeDasharray="2 5 4 9">
          <path d="M716 215 720 280M733 218 736 300M742 240 746 340" stroke="#fac57f" strokeWidth="1.200" opacity=".8" />
          <path d="M700 373H762" stroke="#f3a96c" strokeWidth="3.500" opacity=".55" />
        </g>
      </g>
      <g filter="url(#rough)">
        <path d="M674 209.500 700 211 725 215 748 213.500" stroke="#ef8151" strokeWidth="1.800" strokeDasharray="6 3 12 1" />
        <path d="M748 214 751 246 757 301 763 362 766 377 771 431 776 481 781 521 777 532 767 540" stroke="#dc3e2c" strokeWidth="1.700" />
        <path d="M750 235 756 295 762 350 764 376" stroke="#f28d55" strokeWidth="1.800" />
        <path d="M767 540 758 547 750 561 741 574" stroke="#e2583a" strokeWidth="1.700" />
        <path d="M420 576 500 577 600 576 740 573" stroke="#f18650" strokeWidth="2.300" />
        <path d="M432 577.500H470M530 577H550M620 577H660" stroke="#d93929" strokeWidth="1.700" />
        <path d="M384 583h4M408 583.500l40-1M455 582 740 580" stroke="#ef9a70" strokeWidth=".9" strokeDasharray="8 2 20 3" />
        <path d="M401 548 405 564 413 567 418 574" stroke="#e4623e" strokeWidth="1.200" />
        <path d="M676 203h12M693 201h25M722 200h8M730 197h4M737 195h5" stroke="#ee7f5d" strokeWidth="1.200" />
        <path d="M760 557 769 556.500 770 555 779 554.500" stroke="#dd4b2e" strokeWidth="3.500" />
        <path d="M762 552l12-3M749 580h10M772 584h6" stroke="#ee9a86" strokeWidth=".9" />
        <path d="M645 643h8M659 642h4M668 641.500h2" stroke="#df4c3c" strokeWidth="1.200" />
        <path d="M691 593l3-3 3 3" stroke="#ee995a" strokeWidth="1.500" />
        <path d="M768 218h4M806 604v3M808 615h1" stroke="#e56d52" strokeWidth="1.200" />
        <path d="M757 533v6" stroke="#e04d31" strokeWidth="3" />
        <path d="M434 549v18" stroke="#fff" strokeWidth="3.500" /><path d="M431 548v16" stroke="#e4725b" strokeWidth="1" />
        <path d="M440 565h5M513 566h4M581 565h4" stroke="#e8603e" strokeWidth="1.500" />
      </g>
      <path d="M376 547h15v30h-15Z" fill="#fff" filter="url(#crop)" />
      <g filter="url(#rough)"><path d="M390 547v28M377 577h14" stroke="#f08552" strokeWidth="2" strokeDasharray="4 1" /><path d="M380 570h8" stroke="#f6b070" strokeWidth="4" strokeDasharray="2 1" /><path d="M387 556v8" stroke="#fff" strokeWidth="3" /><path d="M396 549v8M394 560v6" stroke="#ea8b70" /></g>
      <path d="M684 434 710 429 714.500 478 691 482Z" fill="#e4b436" stroke="#46431f" />
      <path d="M692 485 715 482.500 722 534 696.500 536.500Z" fill="#e4b436" stroke="#46431f" />
    </svg>
  </div>
);

type Row = [kind: string, label: string];
const tree: Row[] = [
  [">", "Mesh"], [">", "Network analysis"], [">", "Plots"], ["v", "Raster analysis"], ["cell", "Cell statistics"], ["g", "Equal to frequency"],
  ["gauss", "Fuzzify raster (gaussian membership)"], ["large", "Fuzzify raster (large membership)"], ["linear", "Fuzzify raster (linear membership)"],
  ["near", "Fuzzify raster (near membership)"], ["power", "Fuzzify raster (power membership)"], ["small", "Fuzzify raster (small membership)"],
  ["g", "Greater than frequency"], ["g", "Highest position in raster stack"], ["g", "Less than frequency"], ["g", "Lowest position in raster stack"],
  ["g", "Raster boolean AND"], ["g", "Raster boolean OR"], ["g", "Raster calculator"], ["g", "Raster layer statistics"],
  ["g", "Raster layer unique values report"], ["g", "Raster layer zonal statistics"], ["g", "Raster surface volume"], ["g", "Reclassify by layer"],
  ["g", "Reclassify by table"], ["g", "Rescale raster"], ["round", "Round raster"], ["g", "Sample raster values"], ["g", "Zonal histogram"],
  ["g", "Zonal statistics"], [">", "Raster creation"], [">", "Raster terrain analysis"], [">", "Raster tools"],
];
const curves: Record<string, ReactNode> = {
  gauss: <path d="M4.500 11C7.500 11 7 2 8.500 2s1 9 4 9" stroke="#b25ad0" />,
  large: <><path d="M4.500 11C8 10 9 6 12.500 2" stroke="#df4a42" /><path d="M4.500 9C8 8 9 4 12.500 4" stroke="#47a154" /></>,
  linear: <path d="m4.500 11 8-9" stroke="#f06f66" />,
  near: <path d="M4.500 11C7 11 8 7 8.500 3 9 7 10 11 12.500 11" stroke="#5dba5a" />,
  power: <path d="M4.500 11C9 10.500 12 7 12.500 1.500" stroke="#ea4f4f" />,
  small: <><path d="M4.500 2C8 3 8 9 12.500 10" stroke="#df4a42" /><path d="M4.500 4.500C8 4 9 9 12.500 11" stroke="#47a154" /></>,
};
const LeafIcon = ({ k, hot }: { k: string; hot?: boolean }) => {
  const c = hot ? "#4f8fd0" : "#739dcc";
  if (k === "g") return <S className="size-[13px]"><path d="M8 .5v15M.5 8h15M2.700 2.700l10.600 10.600M13.300 2.700 2.700 13.300" stroke={c} strokeWidth="2.500" /><circle cx="8" cy="8" r="4.700" fill={c} /><circle cx="8" cy="8" r="1.500" fill="#b5cde7" /></S>;
  if (k === "cell") return <S className="size-[13px]"><path d="M1 3l2-2h12v12l-2 2H1Z" fill="#dfe6ea" stroke="#22343f" /><path d="M1 4h12M1 7.500h12M1 11h12M13 4v11" stroke="#22343f" strokeWidth="1.600" /><path d="M5 4h6L7 8l4 4H5" stroke="#22343f" strokeWidth="1.500" /></S>;
  if (k === "round") return <S className="size-[13px]"><rect x=".7" y=".7" width="14.600" height="14.600" rx="2" fill="#fff" stroke="#8a8a8a" /><path d="M3 7c2-3 3.500-1.500 5-.7S11 7 13 5M3 11.500c2-3 3.500-1.500 5-.7s3 .7 5-1.300" stroke="#222" strokeWidth="1.400" /></S>;
  return (
    <S vb="0 0 13 13" className="size-[13px]">
      <path d="M3.500.5V12H13" stroke="#777" strokeWidth=".9" /><path d="M1 0v3.500" stroke="#555" strokeWidth=".9" /><ellipse cx="1.200" cy="11" rx=".9" ry="1.500" stroke="#555" strokeWidth=".7" />{curves[k]}
    </S>
  );
};

const Toolbox = () => (
  <div className="flex w-[319px] shrink-0 flex-col pl-[5px]">
    <div className="flex h-[14px] items-center justify-between pr-[1px] pl-[2px] text-[10.500px] tracking-[-0.450px]"><span>Processing Toolbox</span><DockButtons /></div>
    <div className="flex h-[20px] shrink-0 items-center pb-[2px] pl-[3px]">
      <SmallCells list="models rstat python clockg doc" w="w-[16.600px]" /><Sep className="w-1.5" /><SmallCells list="edit" w="w-[16px]" /><Sep className="w-1.5" /><SmallCells list="wrench" w="w-[16px]" />
    </div>
    <div className="flex h-[15px] shrink-0 items-center border border-[#bdbdbd] bg-white pl-[5px] text-[10px] tracking-[-0.250px] text-[#7c7c7c]">
      <S className="size-[9px]"><circle cx="6.500" cy="6.500" r="5" stroke="#888" strokeWidth="1.300" /><path d="m10.500 10.500 5 5" stroke="#888" strokeWidth="1.500" /></S><span className="ml-1">Search...</span>
    </div>
    <div className="flex min-h-0 flex-1 overflow-hidden border border-[#bdbdbd] bg-white">
      <div className="flex min-w-0 flex-1 flex-col pt-[0.500px]">
        {tree.map(([k, label]) => {
          const group = k === ">" || k === "v";
          const hot = label === "Zonal statistics";
          return (
            <div key={label} className={`flex h-[14.660px] shrink-0 items-center text-[10px] tracking-[-0.280px] text-[#1c1c1c] ${hot ? "bg-[#efefef]" : ""} ${group ? "pl-[5px]" : "pl-[35px]"}`}>
              {group ? (
                <>
                  <S vb="0 0 6 6" className="mr-[7.500px] size-1.5">{k === "v" ? <path d="M0 1.500h6L3 5Z" fill="#555" /> : <path d="M1 0l3.500 3L1 6Z" fill="#555" />}</S>
                  <Ic n="logo" className="size-3" /><span className="ml-[5px]">{label}</span>
                </>
              ) : <><LeafIcon k={k} hot={hot} /><span className="ml-[4.500px] whitespace-nowrap">{label}</span></>}
            </div>
          );
        })}
      </div>
      <div className="flex w-[11px] flex-col border-l border-[#cfcfcf] bg-[#e4e4e4]">
        <div className="flex h-3 items-center justify-center border-b border-[#c9c9c9] bg-[#fafafa]"><S vb="0 0 6 4" className="h-1 w-1.5"><path d="M0 4h6L3 0Z" fill="#555" /></S></div>
        <div className="h-[52px]" />
        <div className="h-[284px] border-y border-[#c9c9c9] bg-[#fbfbfb]" />
        <div className="flex-1" />
        <div className="flex h-3 items-center justify-center border-t border-[#c9c9c9] bg-[#fafafa]"><S vb="0 0 6 4" className="h-1 w-1.5"><path d="M0 0h6L3 4Z" fill="#555" /></S></div>
      </div>
    </div>
  </div>
);

const data = [
  ["NR", "0.56617580254...", "0.01921882087..."], ["NR", "0.57854697397...", "0.01872543392..."], ["NR", "0.57750730624...", "0.01599906142..."],
  ["FR", "0.55237390469...", "0.01673318266..."], ["FR", "0.54710268618...", "0.02069492889..."], ["FR", "0.55065528165...", "0.01566583571..."],
];

const Dialog = () => (
  <div className="absolute top-[114px] left-[250px] flex h-[434px] w-[424px] flex-col border border-[#7d7d7d] bg-[#f0f0f0] shadow-[0_3px_12px_2px_rgba(0,0,0,0.350)]">
    <div className="flex h-[25px] shrink-0 items-center bg-white pl-[7px]">
      <Ic n="logo" className="size-[13px]" /><span className="ml-1.5 flex-1 text-[10px] tracking-[-0.250px] text-[#1a1a1a]">Zonal Statistics — Features Total: 6, Filtered: 6, Selected: 0</span>
      <S vb="0 0 102 12" className="mr-px h-3 w-[102px]"><path d="M1 5.500h8" stroke="#777" /><path d="M39.500 1.500h8v8h-8Z" stroke="#333" /><path d="m79 1.500 8 8M87 1.500l-8 8" stroke="#333" /></S>
    </div>
    <div className="flex h-[22px] shrink-0 items-center pb-[2px] pl-[3px]">
      <SmallCells list="pencil eoff saveoff refresh" w="w-[16.700px]" /><Sep />
      <SmallCells list="addpoly trash cut copy paste" w="w-[16.700px]" /><Sep />
      <SmallCells list="sexp sall sinv sdes funnel top pan zsel" w="w-[16.700px]" /><Sep />
      <SmallCells list="newcol newcol cf abacus" w="w-[16.500px]" /><Sep /><SmallCells list="form" w="w-[17px]" /><Sep />
      <span className="ml-auto pr-[3px] pb-[2px] text-[11px] font-bold">»</span>
    </div>
    <div className="flex min-h-0 flex-1 flex-col bg-white text-[10px] tracking-[-0.300px] text-[#222]">
      <div className="flex h-4 shrink-0 bg-[#efefef]">
        <div className="w-[10px] border-r border-b border-[#c9c9c9]" />
        {["id", "treatment", "ndre_mean", "ndre_stdev"].map((h) => <div key={h} className="flex w-[83.300px] items-center justify-center border-r border-b border-[#c4c4c4] bg-linear-to-b from-white to-[#ececec] pt-px">{h}</div>)}
      </div>
      <div className="flex min-h-0 flex-1 flex-col">
        {data.map(([t, m, s], i) => (
          <div key={i} className="flex h-[24.650px] shrink-0 tracking-[-0.330px]">
            <div className="flex w-[10px] items-center justify-center border-r border-b border-[#c4c4c4] bg-[#f4f4f4]">{i + 1}</div>
            <div className={`flex w-[333.200px] ${i % 2 ? "bg-[#e8e6e2]" : "bg-white"}`}>
              <div className={`flex w-[83.300px] items-center justify-end ${i === 0 ? "border-2 border-[#14e37f] bg-linear-to-b from-white to-[#e6f2fd] pr-px" : "border-r border-b border-[#cfcfcf] pr-[2px]"}`}>{i + 1}</div>
              <div className="flex w-[83.300px] items-center border-r border-b border-[#cfcfcf] pl-[2px]">{t}</div>
              <div className="flex w-[83.300px] items-center justify-end border-r border-b border-[#cfcfcf] pr-[2px]">{m}</div>
              <div className="flex w-[83.300px] items-center justify-end border-r border-b border-[#cfcfcf] pr-[2px]">{s}</div>
            </div>
          </div>
        ))}
        <div className="w-[9px] flex-1 bg-[#efefef]" />
      </div>
    </div>
    <div className="flex h-[22px] shrink-0 items-center border-t border-[#c9c9c9] pr-[2px] pl-[2px]">
      <div className="flex h-[18px] w-[96px] items-center rounded-xs border border-[#b9b9b9] bg-linear-to-b from-white to-[#ededed] pl-[4px] text-[9.500px] tracking-[-0.380px] whitespace-nowrap">
        <Ic n="funnel" className="size-3" /><span className="ml-[3px]">Show All Features</span><S vb="0 0 5 4" className="mt-2 h-[3px] w-[5px]"><path d="M0 0h5L2.500 3.500Z" fill="#333" /></S>
      </div>
      <div className="flex-1" />
      <div className="mr-[3px]"><Ic n="formview" className="size-[12px]" /></div>
      <div className="flex h-[18px] w-[18px] items-center justify-center rounded-xs border border-[#b0b0b0] bg-[#d9d9d9]"><Ic n="table" className="size-[13px]" /></div>
    </div>
  </div>
);

const Spin = () => <div className="flex w-3 items-center justify-center self-stretch border-l border-[#d0d0d0] bg-[#f3f3f3]"><S vb="0 0 6 10" className="h-[10px] w-1.5"><path d="M0 4h6L3 .5ZM0 6h6L3 9.500Z" fill="#5a5a5a" /></S></div>;

const StatusBar = () => (
  <div className="flex h-[22px] shrink-0 items-center bg-[#f0f0f0] pl-[3px] font-['DejaVu_Sans_Condensed','DejaVu_Sans',sans-serif] text-[9px] tracking-[-0.270px] whitespace-nowrap text-[#222]">
    <div className="flex h-4 w-[154px] shrink-0 items-center rounded-xs border border-[#b9b9b9] bg-white pl-[5px] text-[#828282]">
      <S className="size-[9px]"><circle cx="6.500" cy="6.500" r="5" stroke="#888" strokeWidth="1.300" /><path d="m10.500 10.500 5 5" stroke="#888" strokeWidth="1.500" /></S><span className="ml-[4px]">Type to locate (Ctrl+K)</span>
    </div>
    <span className="ml-[6px] w-[497px] shrink-0">1 feature(s) deleted.</span>
    <span className="w-[43px] shrink-0">Coordinate</span>
    <div className="flex h-4 w-[89px] shrink-0 items-center rounded-xs border border-[#b9b9b9] bg-white pl-1">606832.1,4260302.2</div>
    <S className="ml-[2px] size-[13px]"><path d="m3 1 4 1 5 6-4 4-6-6Z" fill="#333" /><path d="m4 3 2 2M6 6l3-2" stroke="#fff" /><circle cx="11" cy="11" r="3.700" fill="#ddd" stroke="#333" strokeWidth="1.400" /><path d="m2 12 12-9M9 13l4-4" stroke="#333" strokeWidth="1.100" /></S>
    <span className="ml-[9px] w-[23px] shrink-0">Scale</span>
    <div className="flex h-4 w-[62px] shrink-0 items-center rounded-xs border border-[#b9b9b9] bg-white pl-[2px]"><span className="flex-1">1:3191</span><div className="flex w-4 items-center self-stretch bg-[#f1f1f1] pl-[2px]"><S vb="0 0 7 4" className="h-1 w-[7px]"><path d="M0 0h7L3.500 4Z" fill="#555" /></S></div></div>
    <S className="ml-[7px] size-[13px]"><path d="M4.500 8V5a3.500 3.500 0 0 1 7 0v3" stroke="#808080" strokeWidth="1.700" /><rect x="2" y="7" width="12" height="8" rx="1" fill="#616161" /></S>
    <span className="ml-[4px] w-[38px] shrink-0">Magnifier</span>
    <div className="flex h-4 w-[62px] shrink-0 items-center rounded-xs border border-[#b9b9b9] bg-white pl-[3px]"><span className="flex-1">100%</span><Spin /></div>
    <span className="ml-[6px] w-[37px] shrink-0">Rotation</span>
    <div className="flex h-4 w-[59px] shrink-0 items-center rounded-xs border border-[#b9b9b9] bg-white pl-[2px]"><span className="flex-1">0.0 °</span><Spin /></div>
    <div className="ml-[4px]"><Check /></div><span className="ml-[4px] w-[38px] shrink-0">Render</span>
    <S className="size-[13px]"><circle cx="8" cy="8" r="6.500" fill="#828282" /><path d="M1 5.500h14M1 8.500h14M1 11h14M8 1v14M5 2c-2 4-2 8 0 12M11 2c2 4 2 8 0 12" stroke="#dedede" strokeWidth=".7" /></S>
    <span className="ml-[3px] w-[60px] shrink-0 tracking-[-0.200px]">EPSG:32610</span>
    <S className="size-[14px]"><path d="M8 2c5 0 7 2.500 7 5s-2 4.500-5 5l1 3-4-3C3 12 1 9.500 1 7s2-5 7-5Z" fill="#4a4a4a" /><path d="M4 7h1.500M7.200 7h1.500M10.500 7H12" stroke="#fff" strokeWidth="1.500" /></S>
  </div>
);

const tasks: ReactNode[] = [
  <><circle cx="10" cy="10" r="9" fill="#fbc116" /><path d="M10 10 2.200 5.500A9 9 0 0 1 17.800 5.500L10 6Z" fill="#dd4b3e" /><path d="M2.200 5.500A9 9 0 0 0 9.500 19L13 12 7 12Z" fill="#3fa25a" /><circle cx="10" cy="10" r="4.300" fill="#fff" /><circle cx="10" cy="10" r="3.400" fill="#4b86ea" /></>,
  <><circle cx="10" cy="10" r="9.200" fill="#1ed760" /><path d="M4.500 7.300c4-1.200 8-.8 11.300 1M5 10.400c3.500-1 6.800-.6 9.600.9M5.600 13.300c3-.8 5.500-.5 7.800.8" stroke="#0a1a12" strokeWidth="1.500" strokeLinecap="round" /></>,
  <><path d="m10 0 4.500 4.500L10 9 5.500 4.500Z" fill="#ee6f68" /><path d="M5 5.500 9.500 10 5 14.500.5 10Z" fill="#74a9f2" /><path d="M15 5.500 19.500 10 15 14.500 10.500 10Z" fill="#7fc559" /><path d="m10 10.500 4.500 4.500L10 19.500 5.500 15Z" fill="#f6de7b" /><path d="M7 3.500 10.500 7v8M10 7l4 3.500" stroke="#111" strokeWidth="1.700" /><circle cx="10" cy="15" r="1.600" fill="#111" /><circle cx="14" cy="10.500" r="1.600" fill="#111" /></>,
  <><path d="M1 3h7l1 1.500h10V17H1Z" fill="#f3c544" /><path d="M1 6.500h18V17H1Z" fill="#fce28c" /><path d="M4.500 18.500v-7.500h11v7.500h-3v-4h-5v4Z" fill="#39a9e8" /></>,
  <><circle cx="10" cy="10" r="9.600" fill="#75a9db" /><path d="M6 5.500h5.500c3.500 0 3.500 4.500 0 4.500H8M8 5.500v9M6 14.500h4M11 10l3 4.500h1.500" stroke="#fff" strokeWidth="1.300" /></>,
  null,
  <><path d="M1 2.500 12 .5v19L1 17.500Z" fill="#d04727" /><path d="M12 3h7v14h-7Z" fill="#f6f6f6" stroke="#d04727" /><path d="M13 6h4M13 9h4M13 12h4" stroke="#d04727" strokeWidth="1.300" /><path d="M5 14V6.500h2.500c3 0 3 4 0 4H5" stroke="#fff" strokeWidth="1.500" /></>,
  null,
];
const TaskLogo = () => (
  <><circle cx="9.500" cy="9.500" r="7.300" stroke="#589632" strokeWidth="3.800" /><path d="M3 6.200a7.300 7.300 0 0 1 13.800 3.300" stroke="#93b023" strokeWidth="3.800" /><path d="m10 10 8.500 8.500" stroke="#0b1016" strokeWidth="5" /><path d="m10 10 8.500 8.500" stroke="#6fae3d" strokeWidth="3.600" /><path d="m9 9 4 4" stroke="#f0d848" strokeWidth="3" /><circle cx="9" cy="9" r="1.900" fill="#ee7913" /></>
);

const Taskbar = () => (
  <div className="flex h-[33px] shrink-0 items-stretch bg-[#050a12]">
    <div className="flex w-10 items-center justify-center"><S className="size-[15px]"><path d="M1 3l6-.9v5.500H1ZM8 2l7-1v6.600H8ZM1 8.500h6V14l-6-.9ZM8 8.500h7V15l-7-1Z" fill="#f0f0f0" /></S></div>
    <div className="flex w-10 items-center justify-center"><S className="size-[15px]"><circle cx="9.500" cy="6" r="5" stroke="#ddd" strokeWidth="1.100" /><path d="M6 9.800 1 15" stroke="#ddd" strokeWidth="1.200" /></S></div>
    <div className="flex w-[42px] items-center justify-center pr-[3px]"><S className="size-[15px]"><path d="M2 1v2.500h8V1M2 15v-2.500h8V15M2 5.500h8v5H2ZM14 1v3M14 8v7" stroke="#ddd" strokeWidth="1.200" /><path d="M13 5h2v2h-2Z" fill="#ddd" /></S></div>
    {tasks.map((t, i) => (
      <div key={i} className={`flex w-[41.400px] flex-col items-center ${i === 7 ? "bg-[#3a3e44]" : ""}`}>
        <div className="flex flex-1 items-center"><S vb="0 0 20 20" className="size-[19px]">{t ?? <TaskLogo />}</S></div>
        <div className={`h-[2px] bg-[#76b9ed] ${i === 7 ? "w-full" : "w-[34px]"}`} />
      </div>
    ))}
    <div className="flex-1" />
    <div className="flex w-[81px] items-center gap-[6px] pl-px">
      <S className="size-[13px]"><path d="m2 11 6-6 6 6" stroke="#eee" strokeWidth="1.300" /></S>
      <S className="size-[14px]"><rect x="4" y="5" width="10" height="7" fill="#f2f2f2" stroke="#fff" /><path d="M15 7v3" stroke="#fff" strokeWidth="1.500" /><path d="M2 3v3M4.500 3v3M1 6h4.500v2L3 9.500Z" stroke="#fff" fill="#fff" /></S>
      <S className="size-[13px]"><path d="M1 12A11 11 0 0 1 13 1.500M4 13A8.500 8.500 0 0 1 14 4.800M7.500 14A6 6 0 0 1 14.500 8.500" stroke="#bbb" strokeWidth="1.300" /><circle cx="12.500" cy="13" r="1.700" fill="#fff" /></S>
      <S className="size-[14px]"><path d="M1 6h2.500L7 2.500v11L3.500 10H1Z" stroke="#eee" /><path d="M9 6c1 1.500 1 3 0 4M11 4.500c2 2.500 2 5 0 7M13 3c3 3.500 3 7 0 10" stroke="#aaa" /></S>
    </div>
    <div className="flex w-[46px] flex-col items-center justify-center text-[10px] leading-[15.500px] tracking-[-0.200px] whitespace-nowrap text-[#f0f0f0]"><span>10:13 AM</span><span>7/16/2021</span></div>
    <div className="flex w-[42px] items-center justify-center"><S className="size-[15px]"><path d="M1 2h14v10.500H11V15.500L8 12.500H1Z" stroke="#eee" strokeWidth="1.100" /></S></div>
    <div className="mr-[3px] ml-[4px] w-px bg-[#4b4f55]" />
  </div>
);

export default function App() {
  return (
    <div className="relative flex h-[720px] w-[1280px] flex-col overflow-hidden bg-[#f0f0f0] font-['Open_Sans','Noto_Sans',sans-serif] text-[#1a1a1a]">
      <Toolbars />
      <div className="flex h-[525px] shrink-0"><LayersPanel /><MapCanvas /><Toolbox /></div>
      <StatusBar />
      <Taskbar />
      <Dialog />
    </div>
  );
}
